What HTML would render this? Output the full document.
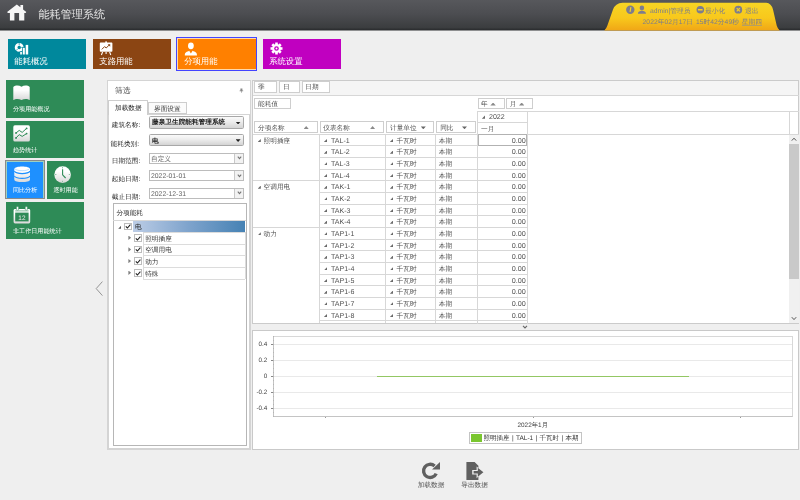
<!DOCTYPE html>
<html><head><meta charset="utf-8"><title>能耗管理系统</title>
<style>
*{box-sizing:border-box;margin:0;padding:0}
html,body{width:800px;height:500px;overflow:hidden}
body{background:#efefef;font-family:"Liberation Sans",sans-serif;font-size:6.67px;color:#444;position:relative;text-rendering:geometricPrecision}
.abs{position:absolute}
.hdr{left:0;top:0;width:800px;height:31px;background:linear-gradient(#57585c 0,#4c4d51 14px,#3b3d3f 27.5px,#2c2e30 29.6px,#2c2e30 30px,#8e8f90 30px,#8e8f90 31px)}
.title{left:38.5px;top:7.5px;font-size:11.2px;color:#e4e4e4;line-height:14px;white-space:nowrap;letter-spacing:-0.1px}
.tile{position:absolute;color:#fff;font-size:8.33px;white-space:nowrap}
.tile span{position:absolute;left:6.5px;top:17.2px;line-height:10px}
.stile{position:absolute;color:#fff;font-size:6.1px;white-space:nowrap;background:#2e8b57}
.stile span{position:absolute;left:6.9px;line-height:8px}
.lbl{position:absolute;white-space:nowrap;line-height:9px;color:#262626}
.box{position:absolute;background:#fff;border:0.6px solid #cecece;white-space:nowrap;line-height:10.8px;padding:1.3px 0 0 2.8px;color:#505050}
.cell{position:absolute;white-space:nowrap;line-height:11.67px;color:#505050}
.hl{position:absolute;background:#d7d7d7;height:0.7px}
.vl{position:absolute;background:#d7d7d7;width:0.7px}
.tri{position:absolute;width:3.2px;height:3.2px;background:#6a6a6a;clip-path:polygon(100% 0,100% 100%,0 100%);margin:-0.5px 0 0 -0.4px}
.up{position:absolute;width:5px;height:2.8px;background:#8a8a8a;clip-path:polygon(50% 0,100% 100%,0 100%)}
.dn{position:absolute;width:5px;height:2.8px;background:#666;clip-path:polygon(0 0,100% 0,50% 100%)}
.combo{position:absolute;height:12px;border:0.7px solid #a8a8a8;border-radius:1.6px;background:linear-gradient(#fafafa,#ececec 45%,#d4d4d4);font-weight:bold;color:#222;line-height:10.4px;padding-left:2px;white-space:nowrap;font-size:6.67px}
.inp{position:absolute;height:10.6px;border:0.7px solid #bcbcbc;background:#fff;line-height:11.4px;padding-left:1px;color:#666;white-space:nowrap}
.inp i{position:absolute;right:0;top:0;bottom:0;width:9.4px;border-left:0.7px solid #c8c8c8;background:#f2f2f2}
.cb{position:absolute;width:7.6px;height:7.6px;border:0.7px solid #bcbcbc;background:#fff}
.tick{position:absolute;background:#888}
.ylab{position:absolute;width:20px;text-align:right;line-height:8px;color:#444;font-size:6.35px}
</style></head><body><div id="root" style="position:absolute;left:0;top:0;width:800px;height:500px;overflow:hidden;will-change:transform">

<div class="abs hdr"></div>
<svg class="abs" style="left:0;top:0" width="40" height="30" viewBox="0 0 40 30"><path fill="#f6f6f6" d="M16.8 4.4 L20.4 7.2 V4.9 H23.1 V9.4 L26.3 12 L25.6 12.9 H24.3 V20.5 H19.1 V13 H14.4 V20.5 H9.9 V12.9 H7.9 L7.1 12 Z"/></svg>
<div class="abs title">能耗管理系统</div>
<svg class="abs" style="left:596px;top:0" width="204" height="32" viewBox="596 0 204 32">
<defs><linearGradient id="yg" x1="0" y1="0" x2="0" y2="1"><stop offset="0" stop-color="#f7d524"/><stop offset="0.55" stop-color="#f8c81c"/><stop offset="1" stop-color="#f0a616"/></linearGradient></defs>
<path fill="url(#yg)" d="M604.3 30.6 Q606.4 28.4 607.4 25.4 L613 9.6 Q615.2 3 622.6 2.7 H766.2 Q771.4 3 773 9.6 L776.7 25.4 Q777.6 28.4 779.7 30.6 Z"/>
<g fill="#7d7d8e">
<circle cx="630.3" cy="9.7" r="4.2"/>
<circle cx="641.9" cy="7.9" r="2.3"/><path d="M637.9 13.8 C637.9 11.6 640 11.2 641.9 10.6 C643.8 11.2 646 11.6 646 13.8 Z"/>
<circle cx="700.3" cy="9.7" r="3.8"/>
<circle cx="738.3" cy="9.7" r="3.9"/>
</g>
<path d="M630.9 7.2 l-0.9 4.6" stroke="#f7d524" stroke-width="1.1" fill="none"/>
<rect x="698" y="9" width="4.6" height="1.5" fill="#f7d022"/>
<path d="M736.7 8.1 l3.2 3.2 M739.9 8.1 l-3.2 3.2" stroke="#f7d022" stroke-width="1.2"/>
</svg>
<div class="abs" style="left:650px;top:6.8px;font-size:6.75px;color:#7c7c8c;line-height:9px;white-space:nowrap">admin|管理员</div>
<div class="abs" style="left:705px;top:6.8px;font-size:6.75px;color:#7c7c8c;line-height:9px;white-space:nowrap">最小化</div>
<div class="abs" style="left:745px;top:6.8px;font-size:6.75px;color:#7c7c8c;line-height:9px;white-space:nowrap">退出</div>
<div class="abs" style="left:642.6px;top:17.6px;font-size:6.7px;color:#7c7c8c;line-height:9px;white-space:nowrap;letter-spacing:0.06px;word-spacing:1px">2022年02月17日 15时42分49秒 <span style="background:linear-gradient(#9c9584,#9c9584) 0 100%/100% 0.7px no-repeat">星期四</span></div>
<div class="tile" style="left:7.8px;top:39.1px;width:77.9px;height:30px;background:#00889c"><svg class="abs" style="left:6px;top:2.5px" width="20" height="14" viewBox="0 0 20 14"><circle cx="5.2" cy="5.4" r="3.1" fill="none" stroke="#fff" stroke-width="2.7"/><path d="M5.2 1 V3.4 M9.6 5.4 H7.2 M2 8.6 l1.6-1.6" stroke="#00889c" stroke-width="0.7"/><rect x="5.6" y="9.3" width="9.2" height="3.6" fill="#00889c"/><rect x="8.1" y="5.4" width="6.6" height="7.4" fill="#00889c"/><rect x="6.2" y="9.9" width="1.7" height="2.6" fill="#fff"/><rect x="8.8" y="5.9" width="2" height="6.6" fill="#fff"/><rect x="11.7" y="2.9" width="2.5" height="9.6" fill="#fff"/></svg><span>能耗概况</span></div>
<div class="tile" style="left:92.8px;top:39.1px;width:77.9px;height:30px;background:#8b4513"><svg class="abs" style="left:6px;top:2px" width="16" height="15" viewBox="0 0 16 15"><rect x="6.3" y="0.4" width="1.6" height="1.6" fill="#fff"/><rect x="0.8" y="1.6" width="12.6" height="9.2" rx="0.8" fill="#fff"/><path d="M3.6 11 l-1.2 3 M10.6 11 l1.2 3 M7.1 11 v2" stroke="#fff" stroke-width="1.1"/><path d="M2.8 8.4 L5.6 5.6 L7.2 7 L10.4 3.8" stroke="#8b4513" stroke-width="1" fill="none"/><path d="M8.6 3.2 H11.2 V5.8 Z" fill="#8b4513"/></svg><span>支路用能</span></div>
<div class="abs" style="left:175.9px;top:37.1px;width:81.3px;height:33.7px;border:0.9px solid #4444ff;background:#ffd9a8"></div>
<div class="tile" style="left:177.7px;top:39.1px;width:77.9px;height:30px;background:#ff8000"><svg class="abs" style="left:6.5px;top:2.5px" width="14" height="14" viewBox="0 0 14 14"><ellipse cx="6.9" cy="3.8" rx="2.9" ry="3.4" fill="#fff"/><path d="M0.8 13.4 C0.8 10 3 10 5.2 8.8 L6.9 11.4 L8.6 8.8 C10.8 10 13 10 13 13.4 Z" fill="#fff"/></svg><span>分项用能</span></div>
<div class="tile" style="left:262.7px;top:39.1px;width:77.9px;height:30px;background:#c000c0"><svg class="abs" style="left:7px;top:3.2px" width="13" height="13" viewBox="-6.5 -6.5 13 13"><g fill="#fff"><circle r="4.4"/><rect x="-1.3" y="-6" width="2.6" height="3" transform="rotate(0)"/><rect x="-1.3" y="-6" width="2.6" height="3" transform="rotate(45)"/><rect x="-1.3" y="-6" width="2.6" height="3" transform="rotate(90)"/><rect x="-1.3" y="-6" width="2.6" height="3" transform="rotate(135)"/><rect x="-1.3" y="-6" width="2.6" height="3" transform="rotate(180)"/><rect x="-1.3" y="-6" width="2.6" height="3" transform="rotate(225)"/><rect x="-1.3" y="-6" width="2.6" height="3" transform="rotate(270)"/><rect x="-1.3" y="-6" width="2.6" height="3" transform="rotate(315)"/></g><circle r="2.3" fill="#c000c0"/><circle r="1" fill="#fff"/></svg><span>系统设置</span></div>
<div class="stile" style="left:6.1px;top:80.1px;width:78.2px;height:37.6px"><svg class="abs" style="left:7px;top:5.4px" width="18" height="16" viewBox="0 0 18 16"><defs><linearGradient id="wg" x1="0" y1="0" x2="0" y2="1"><stop offset="0.3" stop-color="#fff"/><stop offset="1" stop-color="#d8d8d8"/></linearGradient></defs><path fill="url(#wg)" d="M0.3 1.9 C2.4 0.1 6 0.1 8.5 1.7 C11 0.1 14.6 0.1 16.7 1.9 V15.1 C14.6 13.5 11 13.5 8.5 15.1 C6 13.5 2.4 13.5 0.3 15.1 Z"/></svg><span style="top:26.2px">分项用能概况</span></div>
<div class="stile" style="left:6.1px;top:120.6px;width:78.2px;height:37.4px"><svg class="abs" style="left:7px;top:4.6px" width="18" height="17" viewBox="0 0 18 17"><rect x="0.3" y="0.3" width="16.6" height="16.2" rx="1.6" fill="url(#wg)"/><path d="M3 8 L6.2 5.4 L9.2 7.4 L13.6 3.4 M3 13 L6.2 9.6 L9.2 11.4 L13.6 8.6" stroke="#2e8b57" stroke-width="1" fill="none"/><g fill="#2e8b57"><circle cx="3" cy="8" r="0.9"/><circle cx="13.6" cy="3.4" r="0.9"/><circle cx="3" cy="13" r="0.9"/><circle cx="13.6" cy="8.6" r="0.9"/></g></svg><span style="top:26.4px">趋势统计</span></div>
<div class="abs" style="left:5.3px;top:160.3px;width:39.4px;height:39.2px;border:0.9px solid #8a8a8a;background:#9fd0c0"></div>
<div class="stile" style="left:6.7px;top:161.5px;width:36.8px;height:36.9px;background:#1e90ff"><svg class="abs" style="left:7.5px;top:4.6px" width="17" height="17" viewBox="0 0 17 17"><path fill="url(#wg)" d="M0.3 3 C0.3 -0.5 16 -0.5 16 3 V13.4 C16 17 0.3 17 0.3 13.4 Z"/><path d="M0.3 5.2 C2.4 8.4 13.9 8.4 16 5.2 M0.3 10 C2.4 13.2 13.9 13.2 16 10" stroke="#1e90ff" stroke-width="1.2" fill="none"/><path d="M1 2.9 C3.2 5.3 13.1 5.3 15.3 2.9" stroke="#8cc6ff" stroke-width="0.6" fill="none"/></svg><span style="top:25.4px;left:6.2px">同比分析</span></div>
<div class="stile" style="left:46.8px;top:161.2px;width:37.5px;height:37.5px"><svg class="abs" style="left:7.4px;top:4.4px" width="18" height="18" viewBox="0 0 18 18"><circle cx="8.6" cy="8.6" r="8.3" fill="url(#wg)"/><path d="M8.6 3.2 V8.8 L11.6 12" stroke="#2e8b57" stroke-width="1.1" fill="none"/><g fill="#7ab894"><rect x="8.2" y="1" width="0.8" height="1.4"/><rect x="8.2" y="14.8" width="0.8" height="1.4"/><rect x="1" y="8.2" width="1.4" height="0.8"/><rect x="14.8" y="8.2" width="1.4" height="0.8"/></g></svg><span style="top:25.7px;left:6.6px">逐时用能</span></div>
<div class="stile" style="left:6.1px;top:202px;width:78.2px;height:37.3px"><svg class="abs" style="left:7px;top:3.8px" width="19" height="19" viewBox="0 0 19 19"><rect x="0.6" y="3" width="16.6" height="14.4" rx="1.4" fill="url(#wg)"/><rect x="2.2" y="6.6" width="13.4" height="8.8" fill="#2e8b57"/><path d="M2.2 4.9 H15.6" stroke="#2e8b57" stroke-width="0.6"/><rect x="3.4" y="0.6" width="2.2" height="3.6" rx="0.9" fill="#fff" stroke="#2e8b57" stroke-width="0.5"/><rect x="12.2" y="0.6" width="2.2" height="3.6" rx="0.9" fill="#fff" stroke="#2e8b57" stroke-width="0.5"/><text x="8.9" y="13.6" font-family="Liberation Sans, sans-serif" font-size="6.4" fill="#e8e8e8" text-anchor="middle">12</text></svg><span style="top:26.2px">非工作日用能统计</span></div>
<svg class="abs" style="left:94px;top:280px" width="10" height="18" viewBox="0 0 10 18"><path d="M8.4 1.6 L2.2 8.6 L8.4 15.6" stroke="#8a8a8a" stroke-width="0.9" fill="none"/></svg>
<div class="abs" style="left:106.6px;top:79.6px;width:144.8px;height:370.4px;background:#fff;border:0.8px solid #d4d4d4"></div>
<div class="lbl" style="left:115px;top:85.8px;font-size:7.8px;color:#555;line-height:10px">筛选</div>
<svg class="abs" style="left:239px;top:88px" width="5" height="6" viewBox="0 0 5 6"><path d="M1.4 0.6 H3.4 V2.6 H4.2 V3.2 H2.7 V4.8 H2.1 V3.2 H0.6 V2.6 H1.4 Z" fill="#888"/></svg>
<div class="abs" style="left:108px;top:113.7px;width:142px;height:335px;border:0.8px solid #d4d4d4;background:#fff"></div>
<div class="abs" style="left:148px;top:101.6px;width:38.8px;height:12.6px;border:0.8px solid #cdcdcd;background:#fbfbfb"></div>
<div class="abs" style="left:108px;top:100.4px;width:40.4px;height:14.3px;border:0.8px solid #cdcdcd;border-bottom:none;background:#fff;border-radius:1px 1px 0 0"></div>
<div class="lbl" style="left:115px;top:104px;color:#222">加载数据</div>
<div class="lbl" style="left:154px;top:104.6px;color:#333">界面设置</div>
<div class="lbl" style="left:111.8px;top:120.6px">建筑名称:</div>
<div class="combo" style="left:149px;top:116.3px;width:94.6px;height:12.4px;line-height:12.4px">藤泉卫生院能耗管理系统<b class="dn" style="left:85.6px;top:4.4px;background:#222"></b></div>
<div class="lbl" style="left:110.6px;top:139.5px">能耗类别:</div>
<div class="combo" style="left:149px;top:133.8px;width:94.6px;line-height:13.4px">电<b class="dn" style="left:85.6px;top:4.4px;background:#222"></b></div>
<div class="lbl" style="left:111.8px;top:157.4px">日期范围:</div>
<div class="inp" style="left:149px;top:152.8px;width:95px;height:11px">自定义<i><svg style="position:absolute;left:2.4px;top:2.6px" width="5" height="4" viewBox="0 0 5 4"><path d="M0.8 0.7 L2.5 2.7 L4.2 0.7" stroke="#747474" stroke-width="1.05" fill="none"/></svg></i></div>
<div class="lbl" style="left:111.8px;top:174.9px">起始日期:</div>
<div class="inp" style="left:149px;top:170.2px;width:95px"><span style="font-size:6.85px">2022-01-01</span><i><svg style="position:absolute;left:2.4px;top:2.6px" width="5" height="4" viewBox="0 0 5 4"><path d="M0.8 0.7 L2.5 2.7 L4.2 0.7" stroke="#747474" stroke-width="1.05" fill="none"/></svg></i></div>
<div class="lbl" style="left:111.8px;top:192.5px">截止日期:</div>
<div class="inp" style="left:149px;top:187.9px;width:95px;height:11px"><span style="font-size:6.85px">2022-12-31</span><i><svg style="position:absolute;left:2.4px;top:2.6px" width="5" height="4" viewBox="0 0 5 4"><path d="M0.8 0.7 L2.5 2.7 L4.2 0.7" stroke="#747474" stroke-width="1.05" fill="none"/></svg></i></div>
<div class="abs" style="left:112.8px;top:203.4px;width:133.8px;height:242.6px;border:0.8px solid #b6b6b6;background:#fff"></div>
<div class="lbl" style="left:116.4px;top:208.6px">分项能耗</div>
<div class="hl" style="left:113.4px;top:220.4px;width:132.6px"></div>
<div class="abs" style="left:133px;top:221px;width:112.4px;height:11.2px;background:linear-gradient(90deg,#bccde6,#7ea3cc 50%,#4682b4)"></div>
<div class="tri" style="left:118.6px;top:226px;background:#555"></div>
<div class="cb" style="left:124px;top:222.8px"><svg style="position:absolute;left:0.4px;top:0.6px" width="6" height="5" viewBox="0 0 6 5"><path d="M0.8 2.4 L2.4 4 L5.4 0.6" stroke="#222" stroke-width="1.1" fill="none"/></svg></div>
<div class="lbl" style="left:135px;top:223.4px;color:#222">电</div>
<div class="hl" style="left:143px;top:232.00px;width:102.4px;background:#dcdcdc"></div>
<div class="abs" style="left:128.4px;top:235.60px;width:2.7px;height:4.4px;background:#808080;clip-path:polygon(0 0,100% 50%,0 100%)"></div>
<div class="cb" style="left:134px;top:234.10px"><svg style="position:absolute;left:0.4px;top:0.6px" width="6" height="5" viewBox="0 0 6 5"><path d="M0.8 2.4 L2.4 4 L5.4 0.6" stroke="#222" stroke-width="1.1" fill="none"/></svg></div>
<div class="lbl" style="left:145.2px;top:234.80px;color:#333">照明插座</div>
<div class="hl" style="left:143px;top:243.67px;width:102.4px;background:#dcdcdc"></div>
<div class="abs" style="left:128.4px;top:247.27px;width:2.7px;height:4.4px;background:#808080;clip-path:polygon(0 0,100% 50%,0 100%)"></div>
<div class="cb" style="left:134px;top:245.77px"><svg style="position:absolute;left:0.4px;top:0.6px" width="6" height="5" viewBox="0 0 6 5"><path d="M0.8 2.4 L2.4 4 L5.4 0.6" stroke="#222" stroke-width="1.1" fill="none"/></svg></div>
<div class="lbl" style="left:145.2px;top:246.47px;color:#333">空调用电</div>
<div class="hl" style="left:143px;top:255.33px;width:102.4px;background:#dcdcdc"></div>
<div class="abs" style="left:128.4px;top:258.93px;width:2.7px;height:4.4px;background:#808080;clip-path:polygon(0 0,100% 50%,0 100%)"></div>
<div class="cb" style="left:134px;top:257.43px"><svg style="position:absolute;left:0.4px;top:0.6px" width="6" height="5" viewBox="0 0 6 5"><path d="M0.8 2.4 L2.4 4 L5.4 0.6" stroke="#222" stroke-width="1.1" fill="none"/></svg></div>
<div class="lbl" style="left:145.2px;top:258.13px;color:#333">动力</div>
<div class="hl" style="left:143px;top:267.00px;width:102.4px;background:#dcdcdc"></div>
<div class="abs" style="left:128.4px;top:270.60px;width:2.7px;height:4.4px;background:#808080;clip-path:polygon(0 0,100% 50%,0 100%)"></div>
<div class="cb" style="left:134px;top:269.10px"><svg style="position:absolute;left:0.4px;top:0.6px" width="6" height="5" viewBox="0 0 6 5"><path d="M0.8 2.4 L2.4 4 L5.4 0.6" stroke="#222" stroke-width="1.1" fill="none"/></svg></div>
<div class="lbl" style="left:145.2px;top:269.80px;color:#333">特殊</div>
<div class="hl" style="left:143px;top:278.67px;width:102.4px;background:#dcdcdc"></div>
<div class="vl" style="left:143px;top:232.4px;height:46.7px;background:#dcdcdc"></div>
<div class="vl" style="left:245.2px;top:232.4px;height:46.7px;background:#dcdcdc"></div>
<div class="abs" style="left:252px;top:80px;width:547.4px;height:244px;background:#fff;border:1px solid #cbcbcb"></div>
<div class="abs" style="left:253px;top:81px;width:545.4px;height:14px;background:#f5f5f5"></div>
<div class="hl" style="left:253px;top:94.8px;width:546px"></div>
<div class="box" style="left:254.3px;top:81.2px;width:22.8px;height:11.4px">季</div>
<div class="box" style="left:279.2px;top:81.2px;width:20.6px;height:11.4px">日</div>
<div class="box" style="left:301.5px;top:81.2px;width:28.2px;height:11.4px">日期</div>
<div class="box" style="left:254.3px;top:98px;width:36.4px;height:11.4px">能耗值</div>
<div class="box" style="left:477.8px;top:98px;width:27px;height:11.2px"><span style="margin-left:-0.6px">年</span><b class="up" style="left:11.6px;top:3.6px;width:5.4px;height:3px"></b></div>
<div class="box" style="left:506.4px;top:98px;width:26.2px;height:11.2px"><span style="margin-left:-0.4px">月</span><b class="up" style="left:11.6px;top:3.6px;width:5.4px;height:3px"></b></div>
<div class="box" style="left:254.3px;top:121.3px;width:63.4px;height:11.4px">分项名称<b class="up" style="left:48.4px;top:3.8px"></b></div>
<div class="box" style="left:319.5px;top:121.3px;width:64.8px;height:11.4px">仪表名称<b class="up" style="left:49.6px;top:3.8px"></b></div>
<div class="box" style="left:386.2px;top:121.3px;width:48.2px;height:11.4px">计量单位<b class="dn" style="left:33.6px;top:4.2px"></b></div>
<div class="box" style="left:436.4px;top:121.3px;width:39.2px;height:11.4px">同比<b class="dn" style="left:24.6px;top:4.2px"></b></div>
<div class="hl" style="left:477.4px;top:110.6px;width:322px"></div>
<div class="hl" style="left:477.4px;top:122.3px;width:50.4px"></div>
<div class="vl" style="left:477.3px;top:110.6px;height:213px"></div>
<div class="vl" style="left:526.9px;top:110.6px;height:213px"></div>
<div class="vl" style="left:788.5px;top:110.6px;height:23.6px"></div>
<div class="tri" style="left:482.2px;top:115.6px;width:3.7px;height:3.7px"></div>
<div class="cell" style="left:489px;top:112.2px;font-size:7.05px">2022</div>
<div class="cell" style="left:481px;top:123.9px">一月</div>
<div class="hl" style="left:253px;top:133.70px;width:546px"></div>
<div class="vl" style="left:319.3px;top:133.70px;height:189.4px"></div>
<div class="vl" style="left:385.2px;top:133.70px;height:189.4px"></div>
<div class="vl" style="left:435.3px;top:133.70px;height:189.4px"></div>
<div class="hl" style="left:319.3px;top:145.37px;width:208.5px"></div>
<div class="tri" style="left:258px;top:139.40px"></div>
<div class="cell" style="left:263.6px;top:135.70px">照明插座</div>
<div class="tri" style="left:324.2px;top:139.40px"></div>
<div class="cell" style="left:331px;top:135.70px;font-size:7.05px">TAL-1</div>
<div class="tri" style="left:390.2px;top:139.40px"></div>
<div class="cell" style="left:396.6px;top:135.70px">千瓦时</div>
<div class="cell" style="left:438.8px;top:135.70px">本期</div>
<div class="cell" style="left:478px;top:134.80px;width:47.8px;text-align:right;font-size:7.2px">0.00</div>
<div class="hl" style="left:319.3px;top:157.03px;width:208.5px"></div>
<div class="tri" style="left:324.2px;top:151.07px"></div>
<div class="cell" style="left:331px;top:147.37px;font-size:7.05px">TAL-2</div>
<div class="tri" style="left:390.2px;top:151.07px"></div>
<div class="cell" style="left:396.6px;top:147.37px">千瓦时</div>
<div class="cell" style="left:438.8px;top:147.37px">本期</div>
<div class="cell" style="left:478px;top:146.47px;width:47.8px;text-align:right;font-size:7.2px">0.00</div>
<div class="hl" style="left:319.3px;top:168.70px;width:208.5px"></div>
<div class="tri" style="left:324.2px;top:162.73px"></div>
<div class="cell" style="left:331px;top:159.03px;font-size:7.05px">TAL-3</div>
<div class="tri" style="left:390.2px;top:162.73px"></div>
<div class="cell" style="left:396.6px;top:159.03px">千瓦时</div>
<div class="cell" style="left:438.8px;top:159.03px">本期</div>
<div class="cell" style="left:478px;top:158.13px;width:47.8px;text-align:right;font-size:7.2px">0.00</div>
<div class="hl" style="left:253px;top:180.37px;width:274.8px"></div>
<div class="tri" style="left:324.2px;top:174.40px"></div>
<div class="cell" style="left:331px;top:170.70px;font-size:7.05px">TAL-4</div>
<div class="tri" style="left:390.2px;top:174.40px"></div>
<div class="cell" style="left:396.6px;top:170.70px">千瓦时</div>
<div class="cell" style="left:438.8px;top:170.70px">本期</div>
<div class="cell" style="left:478px;top:169.80px;width:47.8px;text-align:right;font-size:7.2px">0.00</div>
<div class="hl" style="left:319.3px;top:192.03px;width:208.5px"></div>
<div class="tri" style="left:258px;top:186.07px"></div>
<div class="cell" style="left:263.6px;top:182.37px">空调用电</div>
<div class="tri" style="left:324.2px;top:186.07px"></div>
<div class="cell" style="left:331px;top:182.37px;font-size:7.05px">TAK-1</div>
<div class="tri" style="left:390.2px;top:186.07px"></div>
<div class="cell" style="left:396.6px;top:182.37px">千瓦时</div>
<div class="cell" style="left:438.8px;top:182.37px">本期</div>
<div class="cell" style="left:478px;top:181.47px;width:47.8px;text-align:right;font-size:7.2px">0.00</div>
<div class="hl" style="left:319.3px;top:203.70px;width:208.5px"></div>
<div class="tri" style="left:324.2px;top:197.73px"></div>
<div class="cell" style="left:331px;top:194.03px;font-size:7.05px">TAK-2</div>
<div class="tri" style="left:390.2px;top:197.73px"></div>
<div class="cell" style="left:396.6px;top:194.03px">千瓦时</div>
<div class="cell" style="left:438.8px;top:194.03px">本期</div>
<div class="cell" style="left:478px;top:193.13px;width:47.8px;text-align:right;font-size:7.2px">0.00</div>
<div class="hl" style="left:319.3px;top:215.37px;width:208.5px"></div>
<div class="tri" style="left:324.2px;top:209.40px"></div>
<div class="cell" style="left:331px;top:205.70px;font-size:7.05px">TAK-3</div>
<div class="tri" style="left:390.2px;top:209.40px"></div>
<div class="cell" style="left:396.6px;top:205.70px">千瓦时</div>
<div class="cell" style="left:438.8px;top:205.70px">本期</div>
<div class="cell" style="left:478px;top:204.80px;width:47.8px;text-align:right;font-size:7.2px">0.00</div>
<div class="hl" style="left:253px;top:227.04px;width:274.8px"></div>
<div class="tri" style="left:324.2px;top:221.07px"></div>
<div class="cell" style="left:331px;top:217.37px;font-size:7.05px">TAK-4</div>
<div class="tri" style="left:390.2px;top:221.07px"></div>
<div class="cell" style="left:396.6px;top:217.37px">千瓦时</div>
<div class="cell" style="left:438.8px;top:217.37px">本期</div>
<div class="cell" style="left:478px;top:216.47px;width:47.8px;text-align:right;font-size:7.2px">0.00</div>
<div class="hl" style="left:319.3px;top:238.70px;width:208.5px"></div>
<div class="tri" style="left:258px;top:232.74px"></div>
<div class="cell" style="left:263.6px;top:229.04px">动力</div>
<div class="tri" style="left:324.2px;top:232.74px"></div>
<div class="cell" style="left:331px;top:229.04px;font-size:7.05px">TAP1-1</div>
<div class="tri" style="left:390.2px;top:232.74px"></div>
<div class="cell" style="left:396.6px;top:229.04px">千瓦时</div>
<div class="cell" style="left:438.8px;top:229.04px">本期</div>
<div class="cell" style="left:478px;top:228.14px;width:47.8px;text-align:right;font-size:7.2px">0.00</div>
<div class="hl" style="left:319.3px;top:250.37px;width:208.5px"></div>
<div class="tri" style="left:324.2px;top:244.40px"></div>
<div class="cell" style="left:331px;top:240.70px;font-size:7.05px">TAP1-2</div>
<div class="tri" style="left:390.2px;top:244.40px"></div>
<div class="cell" style="left:396.6px;top:240.70px">千瓦时</div>
<div class="cell" style="left:438.8px;top:240.70px">本期</div>
<div class="cell" style="left:478px;top:239.80px;width:47.8px;text-align:right;font-size:7.2px">0.00</div>
<div class="hl" style="left:319.3px;top:262.04px;width:208.5px"></div>
<div class="tri" style="left:324.2px;top:256.07px"></div>
<div class="cell" style="left:331px;top:252.37px;font-size:7.05px">TAP1-3</div>
<div class="tri" style="left:390.2px;top:256.07px"></div>
<div class="cell" style="left:396.6px;top:252.37px">千瓦时</div>
<div class="cell" style="left:438.8px;top:252.37px">本期</div>
<div class="cell" style="left:478px;top:251.47px;width:47.8px;text-align:right;font-size:7.2px">0.00</div>
<div class="hl" style="left:319.3px;top:273.70px;width:208.5px"></div>
<div class="tri" style="left:324.2px;top:267.74px"></div>
<div class="cell" style="left:331px;top:264.04px;font-size:7.05px">TAP1-4</div>
<div class="tri" style="left:390.2px;top:267.74px"></div>
<div class="cell" style="left:396.6px;top:264.04px">千瓦时</div>
<div class="cell" style="left:438.8px;top:264.04px">本期</div>
<div class="cell" style="left:478px;top:263.14px;width:47.8px;text-align:right;font-size:7.2px">0.00</div>
<div class="hl" style="left:319.3px;top:285.37px;width:208.5px"></div>
<div class="tri" style="left:324.2px;top:279.40px"></div>
<div class="cell" style="left:331px;top:275.70px;font-size:7.05px">TAP1-5</div>
<div class="tri" style="left:390.2px;top:279.40px"></div>
<div class="cell" style="left:396.6px;top:275.70px">千瓦时</div>
<div class="cell" style="left:438.8px;top:275.70px">本期</div>
<div class="cell" style="left:478px;top:274.80px;width:47.8px;text-align:right;font-size:7.2px">0.00</div>
<div class="hl" style="left:319.3px;top:297.04px;width:208.5px"></div>
<div class="tri" style="left:324.2px;top:291.07px"></div>
<div class="cell" style="left:331px;top:287.37px;font-size:7.05px">TAP1-6</div>
<div class="tri" style="left:390.2px;top:291.07px"></div>
<div class="cell" style="left:396.6px;top:287.37px">千瓦时</div>
<div class="cell" style="left:438.8px;top:287.37px">本期</div>
<div class="cell" style="left:478px;top:286.47px;width:47.8px;text-align:right;font-size:7.2px">0.00</div>
<div class="hl" style="left:319.3px;top:308.70px;width:208.5px"></div>
<div class="tri" style="left:324.2px;top:302.74px"></div>
<div class="cell" style="left:331px;top:299.04px;font-size:7.05px">TAP1-7</div>
<div class="tri" style="left:390.2px;top:302.74px"></div>
<div class="cell" style="left:396.6px;top:299.04px">千瓦时</div>
<div class="cell" style="left:438.8px;top:299.04px">本期</div>
<div class="cell" style="left:478px;top:298.14px;width:47.8px;text-align:right;font-size:7.2px">0.00</div>
<div class="hl" style="left:319.3px;top:320.37px;width:208.5px"></div>
<div class="tri" style="left:324.2px;top:314.40px"></div>
<div class="cell" style="left:331px;top:310.70px;font-size:7.05px">TAP1-8</div>
<div class="tri" style="left:390.2px;top:314.40px"></div>
<div class="cell" style="left:396.6px;top:310.70px">千瓦时</div>
<div class="cell" style="left:438.8px;top:310.70px">本期</div>
<div class="cell" style="left:478px;top:309.81px;width:47.8px;text-align:right;font-size:7.2px">0.00</div>
<div class="abs" style="left:477.6px;top:134.3px;width:49.6px;height:11.4px;border:0.7px solid #b2b2b2"></div>
<div class="abs" style="left:789.2px;top:134.6px;width:9.6px;height:188.6px;background:#f0f0f0"></div>
<div class="abs" style="left:789.2px;top:144.2px;width:9.6px;height:134.4px;background:#c9c9c9"></div>
<svg class="abs" style="left:791.2px;top:137px" width="6" height="5" viewBox="0 0 6 5"><path d="M0.8 3.6 L3 1.2 L5.2 3.6" stroke="#555" stroke-width="1" fill="none"/></svg>
<svg class="abs" style="left:791.2px;top:316.4px" width="6" height="5" viewBox="0 0 6 5"><path d="M0.8 1.2 L3 3.6 L5.2 1.2" stroke="#555" stroke-width="1" fill="none"/></svg>
<svg class="abs" style="left:522.3px;top:325.2px" width="6" height="4" viewBox="0 0 6 4"><path d="M1 0.8 L3 2.9 L5 0.8" stroke="#666" stroke-width="1.1" fill="none"/></svg>
<div class="abs" style="left:252.3px;top:330.3px;width:546.6px;height:120px;background:#fff;border:0.8px solid #c9c9c9"></div>
<div class="abs" style="left:273.4px;top:336.4px;width:519.4px;height:80.4px;border:0.7px solid #c4c4c4;border-right-color:#d8d8d8;border-top-color:#d8d8d8"></div>
<div class="hl" style="left:274px;top:344.1px;width:518.4px;background:#e9e9e9"></div>
<div class="ylab" style="left:247.4px;top:340.6px">0.4</div>
<div class="tick" style="left:271.4px;top:344.1px;width:2.2px;height:0.6px"></div>
<div class="hl" style="left:274px;top:360.1px;width:518.4px;background:#e9e9e9"></div>
<div class="ylab" style="left:247.4px;top:356.6px">0.2</div>
<div class="tick" style="left:271.4px;top:360.1px;width:2.2px;height:0.6px"></div>
<div class="hl" style="left:274px;top:376.1px;width:518.4px;background:#e9e9e9"></div>
<div class="ylab" style="left:247.4px;top:372.6px">0</div>
<div class="tick" style="left:271.4px;top:376.1px;width:2.2px;height:0.6px"></div>
<div class="hl" style="left:274px;top:392.1px;width:518.4px;background:#e9e9e9"></div>
<div class="ylab" style="left:247.4px;top:388.6px">-0.2</div>
<div class="tick" style="left:271.4px;top:392.1px;width:2.2px;height:0.6px"></div>
<div class="hl" style="left:274px;top:408.1px;width:518.4px;background:#e9e9e9"></div>
<div class="ylab" style="left:247.4px;top:404.6px">-0.4</div>
<div class="tick" style="left:271.4px;top:408.1px;width:2.2px;height:0.6px"></div>
<div class="tick" style="left:272.5px;top:336.1px;width:1.4px;height:0.6px;background:#b4b4b4"></div>
<div class="tick" style="left:272.5px;top:340.1px;width:1.4px;height:0.6px;background:#b4b4b4"></div>
<div class="tick" style="left:272.5px;top:344.1px;width:1.4px;height:0.6px;background:#b4b4b4"></div>
<div class="tick" style="left:272.5px;top:348.1px;width:1.4px;height:0.6px;background:#b4b4b4"></div>
<div class="tick" style="left:272.5px;top:352.1px;width:1.4px;height:0.6px;background:#b4b4b4"></div>
<div class="tick" style="left:272.5px;top:356.1px;width:1.4px;height:0.6px;background:#b4b4b4"></div>
<div class="tick" style="left:272.5px;top:360.1px;width:1.4px;height:0.6px;background:#b4b4b4"></div>
<div class="tick" style="left:272.5px;top:364.1px;width:1.4px;height:0.6px;background:#b4b4b4"></div>
<div class="tick" style="left:272.5px;top:368.1px;width:1.4px;height:0.6px;background:#b4b4b4"></div>
<div class="tick" style="left:272.5px;top:372.1px;width:1.4px;height:0.6px;background:#b4b4b4"></div>
<div class="tick" style="left:272.5px;top:376.1px;width:1.4px;height:0.6px;background:#b4b4b4"></div>
<div class="tick" style="left:272.5px;top:380.1px;width:1.4px;height:0.6px;background:#b4b4b4"></div>
<div class="tick" style="left:272.5px;top:384.1px;width:1.4px;height:0.6px;background:#b4b4b4"></div>
<div class="tick" style="left:272.5px;top:388.1px;width:1.4px;height:0.6px;background:#b4b4b4"></div>
<div class="tick" style="left:272.5px;top:392.1px;width:1.4px;height:0.6px;background:#b4b4b4"></div>
<div class="tick" style="left:272.5px;top:396.1px;width:1.4px;height:0.6px;background:#b4b4b4"></div>
<div class="tick" style="left:272.5px;top:400.1px;width:1.4px;height:0.6px;background:#b4b4b4"></div>
<div class="tick" style="left:272.5px;top:404.1px;width:1.4px;height:0.6px;background:#b4b4b4"></div>
<div class="tick" style="left:272.5px;top:408.1px;width:1.4px;height:0.6px;background:#b4b4b4"></div>
<div class="tick" style="left:272.5px;top:412.1px;width:1.4px;height:0.6px;background:#b4b4b4"></div>
<div class="tick" style="left:272.5px;top:416.1px;width:1.4px;height:0.6px;background:#b4b4b4"></div>
<div class="tick" style="left:325.4px;top:416.8px;width:0.6px;height:1.4px;background:#999"></div>
<div class="tick" style="left:532.8px;top:416.8px;width:0.6px;height:1.4px;background:#999"></div>
<div class="tick" style="left:740.2px;top:416.8px;width:0.6px;height:1.4px;background:#999"></div>
<div class="abs" style="left:377px;top:375.9px;width:312px;height:0.9px;background:#93c763"></div>
<div class="lbl" style="left:502.8px;top:420.6px;width:60px;text-align:center;font-size:6.4px;color:#444">2022年1月</div>
<div class="abs" style="left:469.4px;top:432.4px;width:112.4px;height:11.8px;border:0.7px solid #c4c4c4;background:#fff"></div>
<div class="abs" style="left:471.4px;top:434px;width:10.2px;height:8.4px;background:#7ac62f"></div>
<div class="lbl" style="left:483.6px;top:434.4px;font-size:6.5px;color:#333;word-spacing:0.55px">照明插座 | TAL-1 | 千瓦时 | 本期</div>
<svg class="abs" style="left:421px;top:461px" width="20" height="20" viewBox="0 0 20 20"><path d="M15.2 12.6 A6.6 6.6 0 1 1 13.6 5" stroke="#606060" stroke-width="3.4" fill="none"/><path d="M11 8.6 L19 8.6 L19 1 Z" fill="#606060"/></svg>
<div class="lbl" style="left:401px;top:481.4px;width:60px;text-align:center;color:#555">加载数据</div>
<svg class="abs" style="left:465px;top:461px" width="20" height="20" viewBox="0 0 20 20"><path d="M1.4 1 H9.6 L13.4 4.8 V7 L11.6 5.4 V9 H7.2 V13.6 H11.6 V17.2 L13.4 15.6 V19 H1.4 Z" fill="#606060"/><path d="M8.6 10 H12.8 V6.8 L18.4 11.3 L12.8 15.8 V12.6 H8.6 Z" fill="#606060"/></svg>
<div class="lbl" style="left:444.6px;top:481.4px;width:60px;text-align:center;color:#555">导出数据</div>
</div></body></html>
